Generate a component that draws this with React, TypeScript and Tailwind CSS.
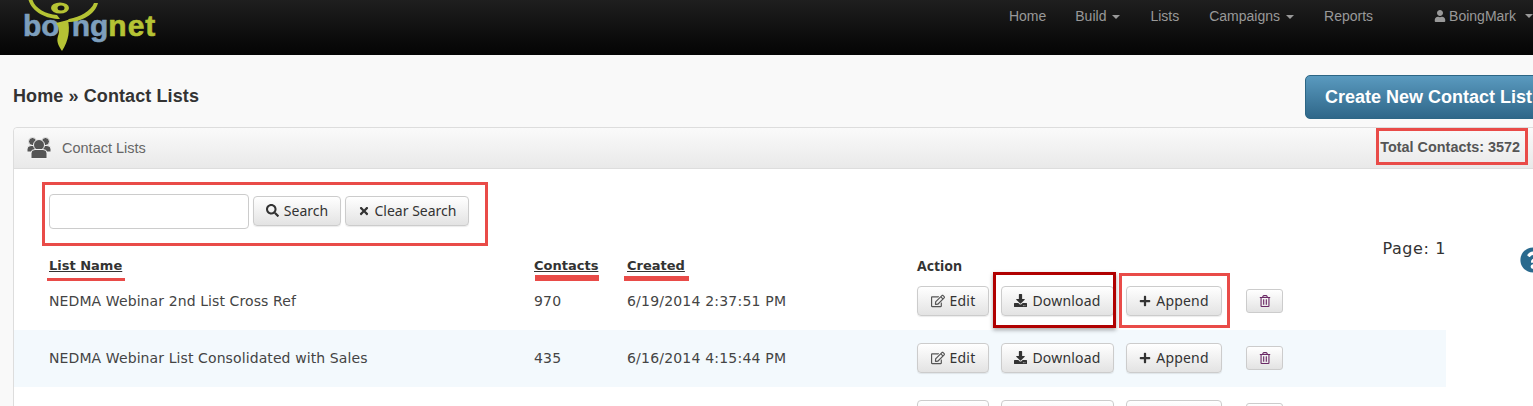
import { FaDownload, FaPlus, FaQuestionCircle, FaRegEdit, FaRegTrashAlt, FaSearch, FaTimes, FaUser } from 'react-icons/fa';
import type { ReactNode } from 'react';

const rows = [
    { name: 'NEDMA Webinar 2nd List Cross Ref', contacts: '970', created: '6/19/2014 2:37:51 PM' },
    { name: 'NEDMA Webinar List Consolidated with Sales', contacts: '435', created: '6/16/2014 4:15:44 PM' },
];

function Caret() {
    return <span className="ml-[6px] inline-block border-x-[4px] border-t-[4px] border-x-transparent border-t-[#999] align-middle" />;
}

function Logo() {
    return (
        <div className="relative ml-[23px] h-[55px] w-[134px] overflow-hidden font-['Liberation_Sans',sans-serif] text-[30px] leading-none font-bold [-webkit-text-stroke:0.6px]">
            <div className="flex pt-[11px]">
                <span className="text-[#7d9fbd]">bo</span>
                <span className="w-[12px]" />
                <span className="text-[#7d9fbd]">ng</span>
                <span className="tracking-[1px] text-[#b5c334]">net</span>
            </div>
            <svg className="absolute top-0 left-0" width="134" height="55" viewBox="0 0 134 55" fill="#b5c334">
                <path d="M9 -2 C11 8 22 14 34 15 L37 19 C23 19 8 12 5 -2 Z" />
                <path d="M71 3 C68 11 57 17 46 19 L42 22 C57 23 72 15 75 3 Z" />
                <ellipse cx="37" cy="8" rx="9" ry="5.5" />
                <ellipse cx="38" cy="8" rx="3.5" ry="2.5" fill="#141414" />
                <path d="M33 23 L45 20 C47 30 46 40 39 51 C36 46 33 42 35 36 C37 31 36 27 33 23 Z" />
            </svg>
        </div>
    );
}

function UsersIcon() {
    return (
        <svg width="24" height="22" viewBox="0 0 24 22" fill="#555" stroke="#f1f1f1" strokeWidth="1">
            <circle cx="5.5" cy="4.5" r="4" />
            <circle cx="18.5" cy="4.5" r="4" />
            <path d="M0 15 V12 Q0 8.5 4 8.5 H20 Q24 8.5 24 12 V15 Z" />
            <circle cx="12" cy="8" r="5.5" />
            <path d="M4 21.5 V16 Q4 12.5 8 12.5 H16 Q20 12.5 20 16 V21.5 Z" />
        </svg>
    );
}

function NavBar() {
    return (
        <nav className="flex h-[55px] bg-gradient-to-b from-[#1f1f1f] to-[#050505] font-['Liberation_Sans',sans-serif] text-[14px] text-[#999]">
            <Logo />
            <div className="ml-auto flex h-[32px] items-center gap-[30px]">
                <span className="-mr-px">Home</span>
                <span>Build<Caret /></span>
                <span>Lists</span>
                <span>Campaigns<Caret /></span>
                <span>Reports</span>
                <span className="ml-[31px] flex items-center gap-[3px]"><FaUser size={12} />BoingMark<Caret /></span>
            </div>
        </nav>
    );
}

function Btn({ icon, children, className }: { icon: ReactNode; children: ReactNode; className: string }) {
    return (
        <button className={`flex h-[30px] items-center justify-center gap-[5px] rounded-[4px] border border-[#ccc] bg-gradient-to-b from-white to-[#e3e3e3] pb-[1px] font-['Noto_Sans',sans-serif] text-[14px] text-[#333] shadow-[0_1px_1px_rgba(0,0,0,0.08)] ${className}`}>
            {icon}
            {children}
        </button>
    );
}

function Actions() {
    return (
        <div className="-mt-px flex items-center">
            <Btn className="w-[72px]" icon={<FaRegEdit size={14} className="text-[#555]" />}>Edit</Btn>
            <Btn className="ml-[12px] w-[113px]" icon={<FaDownload size={13} />}>Download</Btn>
            <Btn className="ml-[12px] w-[96px]" icon={<FaPlus size={12} />}>Append</Btn>
            <button className="ml-[24px] flex h-[24px] w-[37px] items-center justify-center rounded-[3px] border border-[#ccc] bg-gradient-to-b from-white to-[#e3e3e3] text-[#6b2a66]">
                <FaRegTrashAlt size={12} />
            </button>
        </div>
    );
}

function Row({ name, contacts, created, shaded }: { name: string; contacts: string; created: string; shaded?: boolean }) {
    return (
        <div className={`grid h-[57px] grid-cols-[485px_93px_290px_1fr] items-center pl-[35px] text-[14px] tracking-[0.2px] text-[#444] ${shaded ? 'bg-[#f3f9fd]' : ''}`}>
            <span className="tracking-[0.1px]">{name}</span>
            <span>{contacts}</span>
            <span>{created}</span>
            <Actions />
        </div>
    );
}

export default function App() {
    return (
        <div className="relative h-[406px] w-[1533px] overflow-hidden bg-[#f9f9f9] font-['DejaVu_Sans',sans-serif]">
            <NavBar />
            <div className="w-[1560px] pl-[13px]">
                <div className="flex h-[72px] items-center justify-between font-['Liberation_Sans',sans-serif]">
                    <h1 className="mt-[10px] text-[18px] font-bold tracking-[0.1px] text-[#333]">Home » Contact Lists</h1>
                    <button className="mt-[12px] h-[44px] w-[255px] rounded-[5px] border border-[#2d6685] bg-gradient-to-b from-[#5a9abf] to-[#2f6789] pl-[19px] text-left text-[18px] font-bold text-white">
                        Create New Contact List
                    </button>
                </div>
                <section className="rounded-t-[4px] border border-[#ddd] bg-white">
                    <header className="flex h-[41px] items-center justify-between rounded-t-[4px] border-b border-[#ddd] bg-gradient-to-b from-[#fafafa] to-[#e9e9e9] pl-[13px] font-['Liberation_Sans',sans-serif]">
                        <div className="flex items-center gap-[11px] text-[14.5px] text-[#666]">
                            <UsersIcon />
                            <span className="mt-[1px]">Contact Lists</span>
                        </div>
                        <span className="mr-[39px] text-[14.4px] font-bold text-[#555]">Total Contacts: 3572</span>
                    </header>
                    <div className="w-[1432px]">
                        <div className="relative flex h-[64px] items-start gap-[4px] pt-[25px] pl-[35px]">
                            <input className="h-[35px] w-[200px] rounded-[4px] border border-[#ccc] bg-white" />
                            <Btn className="mt-[2px] w-[88px]" icon={<FaSearch size={13} />}>Search</Btn>
                            <Btn className="mt-[2px] w-[124px]" icon={<FaTimes size={12} />}>Clear Search</Btn>
                            <span className="absolute top-[68px] right-0 text-[16px] tracking-[0.6px] text-[#333]">Page: 1</span>
                        </div>
                        <div className="grid h-[40px] grid-cols-[485px_93px_290px_1fr] items-end pl-[35px] text-[13px] leading-[15px] font-bold text-[#333]">
                            <span className="underline">List Name</span>
                            <span className="underline">Contacts</span>
                            <span className="underline">Created</span>
                            <span className="font-['Noto_Sans',sans-serif] text-[14px]">Action</span>
                        </div>
                        {rows.map((r, i) => (
                            <Row key={r.name} {...r} shaded={i === 1} />
                        ))}
                        <Row name="" contacts="" created="" />
                    </div>
                </section>
            </div>

            {/* annotation marks drawn over the page */}
            <div className="absolute top-[182px] left-[42px] h-[64px] w-[446px] border-[3px] border-[#e94b48]" />
            <div className="absolute top-[128px] left-[1376px] h-[37px] w-[152px] border-[3px] border-[#e94b48]" />
            <div className="absolute top-[272px] left-[993px] h-[56px] w-[123px] border-[3px] border-[#b00000] shadow-[0_2px_4px_rgba(0,0,0,0.35)]" />
            <div className="absolute top-[273px] left-[1119px] h-[55px] w-[111px] border-[3px] border-[#e94b48]" />
            <div className="absolute top-[278px] left-[47px] h-[3px] w-[78px] bg-[#e94b48]" />
            <div className="absolute top-[275px] left-[535px] h-[6px] w-[64px] bg-[#e94b48]" />
            <div className="absolute top-[276px] left-[624px] h-[5px] w-[65px] bg-[#e94b48]" />
            <FaQuestionCircle size={26} className="absolute top-[247px] left-[1520px] text-[#2a6a8e]" />
        </div>
    );
}
